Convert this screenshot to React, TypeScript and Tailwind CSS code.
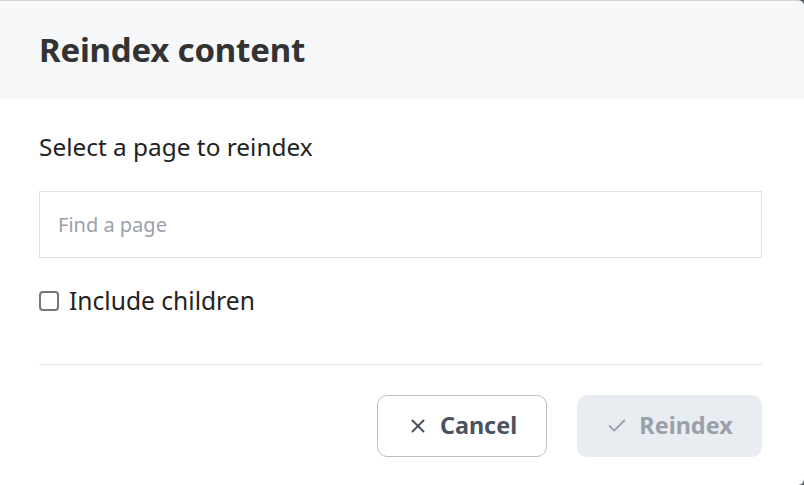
import { X, Check } from 'lucide-react';

export default function App() {
  return (
    <div className="w-[804px] h-[485px] bg-[#5b5f66] font-['Noto_Sans',sans-serif]">
      <div className="w-full h-full bg-white rounded-r-[6px] border-t border-[#d4d6da] flex flex-col overflow-hidden">
        {/* Header */}
        <div className="h-[98px] bg-[#f7f8fa] flex items-center px-[39px]">
          <h1 className="text-[33px] font-bold text-[#333333] tracking-[-0.2px]">Reindex content</h1>
        </div>

        {/* Body */}
        <div className="pl-[39px] pr-[42px] pt-[30px]">
          <p className="text-[24.4px] text-[#222222] leading-[36px]">Select a page to reindex</p>
          <input
            placeholder="Find a page"
            className="mt-[26px] block w-full h-[67px] border border-[#dfe1e6] px-[18px] text-[20px] placeholder:text-[#9aa0ab] outline-none"
          />
          <label className="mt-[27px] h-[32px] flex items-center gap-[10px] text-[24.6px] text-[#222222]">
            <span className="w-[20px] h-[20px] rounded-[4px] border-[2px] border-[#767676] bg-white" />
            Include children
          </label>
          <div className="mt-[47px] h-px bg-[#e3e6ec]" />

          {/* Footer */}
          <div className="mt-[30px] flex justify-end gap-[30px]">
            <button className="w-[170px] h-[62px] rounded-[10px] border border-[#b9bdc4] flex items-center justify-center gap-[11px] text-[23.4px] font-bold text-[#4a5260]">
              <X className="w-[22px] h-[22px]" strokeWidth={2.2} />
              Cancel
            </button>
            <button className="w-[185px] h-[62px] rounded-[10px] bg-[#e9ecf1] flex items-center justify-center gap-[11px] text-[23.4px] font-bold text-[#9aa0a9]">
              <Check className="w-[22px] h-[22px]" strokeWidth={2} />
              Reindex
            </button>
          </div>
        </div>
      </div>
    </div>
  );
}
